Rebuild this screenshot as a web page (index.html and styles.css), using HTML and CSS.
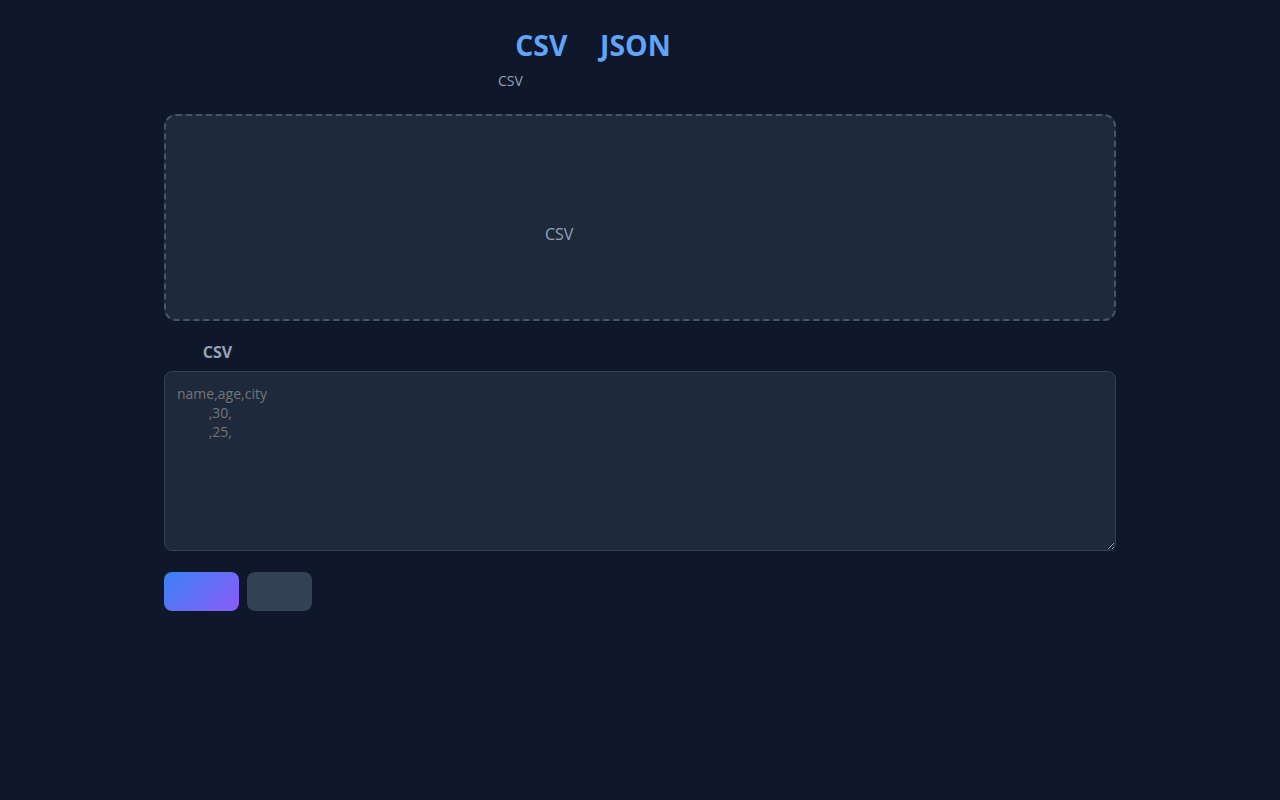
FILE: index.html
```html
<!DOCTYPE html>
<html lang="zh-CN">
<head>
<meta charset="UTF-8">
<title>CSV转JSON转换器</title>
<link rel="stylesheet" href="styles.css">
</head>
<body>
<main class="container">
  <header class="header">
    <h1 class="title">CSV<span class="ghost">转</span>JSON<span class="ghost">转换器</span></h1>
    <p class="subtitle">CSV <span class="ghost">数据一键转换为标准格式，快速便捷</span></p>
  </header>

  <section class="dropzone">
    <div class="drop-icon"><span class="ghost">📂</span></div>
    <p class="drop-text"><span class="ghost">点击或拖拽</span> CSV <span class="ghost">文件到此处，或直接粘贴数据内</span></p>
    <p class="drop-hint"><span class="ghost">支持逗号分隔的文本文件</span></p>
  </section>

  <section class="input-section">
    <label class="label" for="csv"><span class="ghost">输入</span> CSV <span class="ghost">数据</span></label>
    <textarea id="csv" class="textarea" placeholder="name,age,city
　　 ,30,
　　 ,25,"></textarea>
  </section>

  <div class="actions">
    <button class="btn btn-primary"><span class="ghost">转换</span></button>
    <button class="btn btn-secondary"><span class="ghost">清空</span></button>
  </div>
</main>
</body>
</html>
```

FILE: styles.css
```css
* {
  box-sizing: border-box;
}

html, body {
  margin: 0;
  padding: 0;
  background: #0f172a;
  color: #e2e8f0;
  font-family: "Open Sans", "Noto Sans CJK SC", sans-serif;
}

.ghost {
  color: transparent;
  letter-spacing: 0.15em;
}

.container {
  width: 952px;
  margin: 0 auto;
  padding-top: 26px;
}

.header {
  text-align: center;
  margin-bottom: 24px;
}

.title {
  margin: 0 0 7px;
  padding-left: 4px;
  font-size: 28.4px;
  font-weight: 700;
  color: #60a5fa;
  line-height: 38px;
}

.subtitle {
  margin: 0;
  padding-left: 2px;
  font-size: 14px;
  color: #94a3b8;
  line-height: 19px;
}

.dropzone {
  border: 2px dashed #475569;
  border-radius: 12px;
  background: #1e293b;
  height: 207px;
  padding: 40px 20px 0;
  text-align: center;
}

.drop-icon {
  height: 55px;
  margin-bottom: 12px;
  font-size: 40px;
  line-height: 55px;
}

.drop-text {
  margin: 0;
  padding-left: 4px;
  font-size: 16px;
  line-height: 22px;
  color: #94a3b8;
}

.drop-hint {
  margin: 8px 0 0;
  font-size: 13px;
  line-height: 18px;
  color: #64748b;
}

.input-section {
  margin-top: 20px;
}

.label {
  display: block;
  margin-bottom: 8px;
  font-size: 16px;
  font-weight: 700;
  line-height: 22px;
  color: #94a3b8;
}

.label .ghost {
  letter-spacing: 0.08em;
}

.textarea {
  display: block;
  width: 100%;
  height: 180px;
  padding: 12px;
  background: #1e293b;
  border: 1px solid #334155;
  border-radius: 8px;
  color: #e2e8f0;
  font-family: "Open Sans", "Noto Sans CJK SC", sans-serif;
  font-size: 14px;
  line-height: 19px;
  resize: vertical;
}

.actions {
  display: flex;
  gap: 8px;
  margin-top: 21px;
}

.btn {
  height: 39px;
  border: none;
  border-radius: 8px;
  font-family: "Open Sans", "Noto Sans CJK SC", sans-serif;
  font-size: 14px;
  color: #fff;
  cursor: pointer;
}

.btn-primary {
  width: 75px;
  background: linear-gradient(135deg, #3b82f6, #8b5cf6);
}

.btn-secondary {
  width: 65px;
  background: #334155;
}
```
